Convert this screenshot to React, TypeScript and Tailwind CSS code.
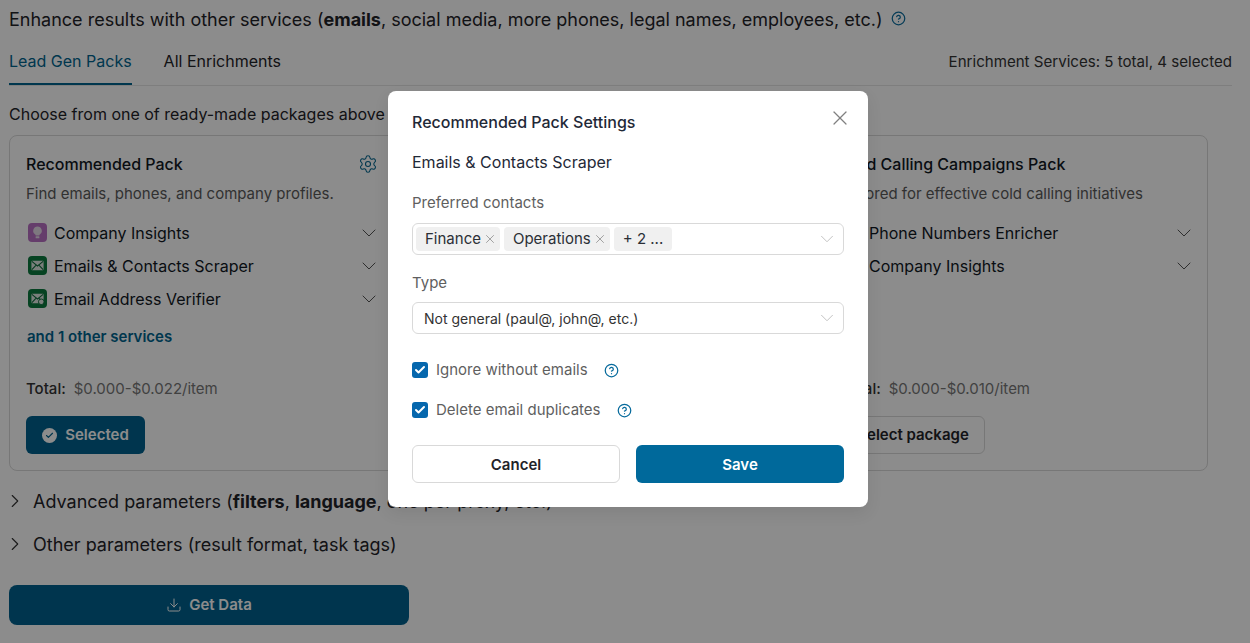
import { Check, ChevronDown, ChevronRight, CircleHelp, Download, Phone, Settings, X } from "lucide-react";

const font = { fontFamily: "Inter, sans-serif" };

function BulbIcon() {
  return (
    <svg viewBox="0 0 16 16" className="size-[15px]">
      <path d="M8 1.5a4.6 4.6 0 0 0-2.7 8.3c.5.4.7.9.7 1.4h4c0-.5.2-1 .7-1.4A4.6 4.6 0 0 0 8 1.5z" fill="#e6dbe8" />
      <rect x="6" y="12" width="4" height="2.2" rx=".6" fill="#e6dbe8" />
    </svg>
  );
}

function EnvelopeIcon({ badge }: { badge?: boolean }) {
  return (
    <svg viewBox="0 0 16 16" className="size-[15px]">
      <rect x="1.5" y="3" width="13" height="10" rx="1" fill="#dfe8e2" />
      <path d="M2 3.5 8 8.5l6-5M2 12.5 6.5 7.5M14 12.5 9.5 7.5" fill="none" stroke="#0b6b3a" strokeWidth="1.1" />
      {badge ? <circle cx="12" cy="11.5" r="3" fill="#dfe8e2" stroke="#0b6b3a" /> : null}
    </svg>
  );
}

function ServiceRow({ icon, label, tint }: { icon: React.ReactNode; label: string; tint: string }) {
  return (
    <div className="flex h-[33px] items-center">
      <span className={`flex size-[19px] items-center justify-center rounded-[4px] ${tint}`}>{icon}</span>
      <span className="ml-[7px] flex-1 text-[16px] text-[#11181f]">{label}</span>
      <ChevronDown className="size-6 text-[#555]" strokeWidth={1} />
    </div>
  );
}

function Tag({ label }: { label: string }) {
  return (
    <span className="flex h-6 items-center rounded-[4px] bg-[#f0f0f0] pl-[9px] pr-[3px] text-[15px] text-[#2b2f36]">
      {label}
      <X className="ml-[2px] size-[14px] text-[#888]" strokeWidth={1.3} />
    </span>
  );
}

function CheckRow({ label }: { label: string }) {
  return (
    <div className="flex h-5 items-center">
      <span className="flex size-4 items-center justify-center rounded-[3px] bg-[#0667ad]">
        <Check className="size-3 text-white" strokeWidth={4} />
      </span>
      <span className="ml-2 mr-4 text-[15px] text-[#5f5f5f]">{label}</span>
      <CircleHelp className="size-[15px] text-[#066a9c]" strokeWidth={2} />
    </div>
  );
}

export default function App() {
  return (
    <div className="relative h-[643px] w-[1250px] overflow-hidden bg-white" style={font}>
      <div className="pl-[9px] pr-[18px] pt-[6px]">
        <div className="flex h-[26px] items-center text-[18px] text-[#1f2329]">
          <span>
            Enhance results with other services (<b className="font-bold">emails</b>, social media, more phones, legal names, employees, etc.)
          </span>
          <CircleHelp className="-mt-[1px] ml-2 size-[15px] text-[#0a6d9e]" strokeWidth={2} />
        </div>
        <div className="mt-[10px] flex h-[44px] items-center justify-between border-b border-[#e6e6e6] text-[16px]">
          <div className="flex h-full">
            <div className="flex h-full items-center border-b-2 border-[#00658f] pb-[3px] text-[#00658f]">Lead Gen Packs</div>
            <div className="ml-8 flex items-center pb-[5px] text-[#1f2329]">All Enrichments</div>
          </div>
          <div className="pb-[3px] text-[15.1px] text-[#333]">Enrichment Services: 5 total, 4 selected</div>
        </div>
        <div className="mt-[16px] h-6 text-[16px] leading-6 text-[#1f2329]">Choose from one of ready-made packages above</div>
        <div className="mr-[24px] mt-[9px] flex h-[336px] justify-between rounded-[8px] border border-[#d9d9d9]">
          <div className="flex w-[387px] flex-col px-4 pb-4 pt-[17px]">
            <div className="flex h-[22px] items-center justify-between">
              <span className="text-[16px] font-medium text-[#11181f]">Recommended Pack</span>
              <Settings className="mr-[3px] size-5 text-[#00658f]" strokeWidth={1.3} />
            </div>
            <div className="mt-2 text-[15px] leading-[22px] text-[#5a5a5a]">Find emails, phones, and company profiles.</div>
            <div className="mt-[11px] pl-[2px]">
              <ServiceRow label="Company Insights" tint="bg-[#b96fc4]" icon={<BulbIcon />} />
              <ServiceRow label="Emails & Contacts Scraper" tint="bg-[#0c7a3e]" icon={<EnvelopeIcon />} />
              <ServiceRow label="Email Address Verifier" tint="bg-[#0c7a3e]" icon={<EnvelopeIcon badge />} />
            </div>
            <div className="ml-[1px] mt-[12px] text-[15px] font-semibold leading-5 text-[#00658f]">and 1 other services</div>
            <div className="mt-[32px] text-[15px] leading-5">
              <span className="font-medium text-[#333]">Total:</span>
              <span className="ml-[8px] text-[#777]">$0.000-$0.022/item</span>
            </div>
            <button className="mt-[17px] flex h-[38px] w-[119px] items-center justify-center gap-2 rounded-[6px] bg-[#00628e] text-[15px] font-semibold text-white">
              <span className="flex size-[15px] items-center justify-center rounded-full bg-white">
                <Check className="size-[9px] text-[#00628e]" strokeWidth={3} />
              </span>
              Selected
            </button>
          </div>
          <div className="flex w-[382px] flex-col pb-4 pl-4 pr-[11px] pt-[17px]">
            <div className="h-[22px] text-[16px] font-medium leading-[22px] text-[#11181f]">Cold Calling Campaigns Pack</div>
            <div className="mt-2 text-[15px] leading-[22px] text-[#5a5a5a]">Tailored for effective cold calling initiatives</div>
            <div className="mt-[11px] pl-[2px]">
              <ServiceRow label="Phone Numbers Enricher" tint="bg-[#2f7bd1]" icon={<Phone className="size-3 text-white" />} />
              <ServiceRow label="Company Insights" tint="bg-[#b96fc4]" icon={<BulbIcon />} />
            </div>
            <div className="mt-auto text-[15px] leading-5">
              <span className="font-medium text-[#333]">Total:</span>
              <span className="ml-[8px] text-[#777]">$0.000-$0.010/item</span>
            </div>
            <button className="mt-[17px] flex h-[38px] w-[144px] items-center justify-center rounded-[6px] border border-[#d9d9d9] text-[15px] font-semibold text-[#1f2329]">
              Select package
            </button>
          </div>
        </div>
        <div className="mt-[17px] flex h-[26px] items-center text-[18px] text-[#1f2329]">
          <ChevronRight className="-ml-[5px] mr-[7px] size-[22px] text-[#333]" strokeWidth={1.2} />
          <span>
            Advanced parameters (<b className="font-bold">filters</b>, <b className="font-bold">language</b>, one per proxy, etc.)
          </span>
        </div>
        <div className="mt-[17px] flex h-[26px] items-center text-[18px] text-[#1f2329]">
          <ChevronRight className="-ml-[5px] mr-[7px] size-[22px] text-[#333]" strokeWidth={1.2} />
          <span>Other parameters (result format, task tags)</span>
        </div>
        <button className="mt-[28px] flex h-10 w-[400px] items-center justify-center gap-[7px] rounded-[8px] bg-[#00628e] text-[15px] font-semibold text-white">
          <Download className="size-4" strokeWidth={1.5} />
          Get Data
        </button>
      </div>

      <div className="absolute inset-0 flex items-start justify-center bg-black/45 pl-[6px] pt-[91px]">
        <div className="h-[416px] w-[480px] rounded-[8px] bg-white px-6 pt-[20px] shadow-[0_6px_16px_rgba(0,0,0,0.08)]">
          <div className="flex h-[22px] items-center justify-between">
            <span className="text-[16px] font-medium text-[#1f2937]">Recommended Pack Settings</span>
            <X className="-mr-2 -mt-2 size-6 text-[#808080]" strokeWidth={1.2} />
          </div>
          <div className="mt-[18px] h-[22px] text-[16px] leading-[22px] text-[#1f2937]">Emails &amp; Contacts Scraper</div>
          <div className="mt-[19px] h-[22px] text-[15px] leading-[22px] text-[#5f5f5f]">Preferred contacts</div>
          <div className="mt-[9px] flex h-8 items-center gap-1 rounded-[6px] border border-[#d9d9d9] pl-[3px] pr-[5px]">
            <Tag label="Finance" />
            <Tag label="Operations" />
            <span className="flex h-6 items-center rounded-[4px] bg-[#f0f0f0] px-[9px] text-[15px] text-[#2b2f36]">+ 2 ...</span>
            <ChevronDown className="ml-auto size-[22px] text-[#bdbdbd]" strokeWidth={1} />
          </div>
          <div className="mt-[17px] h-[22px] text-[15px] leading-[22px] text-[#5f5f5f]">Type</div>
          <div className="mt-[8px] flex h-8 items-center justify-between rounded-[6px] border border-[#d9d9d9] pl-[11px] pr-[5px] text-[14px] text-[#333]">
            Not general (paul@, john@, etc.)
            <ChevronDown className="size-[22px] text-[#bdbdbd]" strokeWidth={1} />
          </div>
          <div className="mt-[26px]">
            <CheckRow label="Ignore without emails" />
          </div>
          <div className="mt-[20px]">
            <CheckRow label="Delete email duplicates" />
          </div>
          <div className="mt-[25px] flex gap-4">
            <button className="h-[38px] w-[208px] rounded-[6px] border border-[#d9d9d9] pt-[2px] text-[15px] font-semibold text-[#1f2329]">Cancel</button>
            <button className="h-[38px] w-[208px] rounded-[6px] bg-[#00699b] pt-[2px] text-[15px] font-semibold text-white">Save</button>
          </div>
        </div>
      </div>
    </div>
  );
}
